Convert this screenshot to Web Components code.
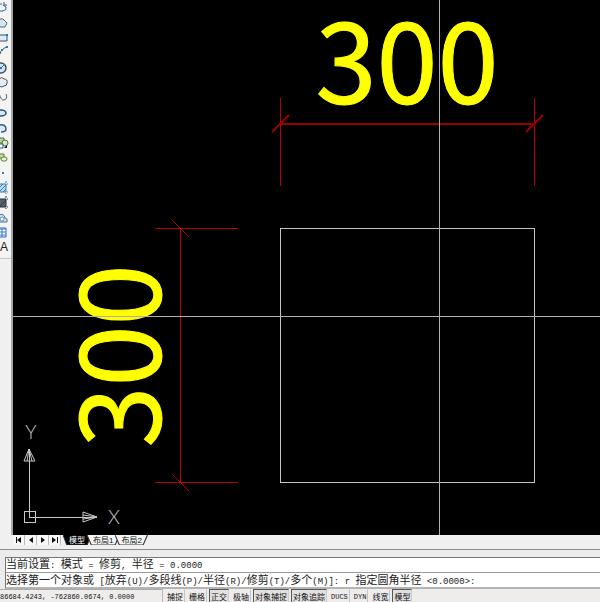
<!DOCTYPE html>
<html lang="zh-CN">
<head>
<meta charset="utf-8">
<title>CAD</title>
<style>
html, body { margin: 0; height: 100%; }
body { font-family: "Liberation Sans", "Noto Sans CJK SC", sans-serif; background: #f0f0f0; overflow: hidden; }
</style>
</head>
<body>
<cad-app></cad-app>
<script>
const define = (name, html, after) => customElements.define(name, class extends HTMLElement {
  constructor() {
    super();
    this.attachShadow({ mode: 'open' }).innerHTML = html;
  }
  connectedCallback() { if (after) after(this, this.shadowRoot); }
});

/* Tool button: its icon is passed in through the slot */
define('tool-button', `
<style>
:host { display: block; height: 15px; }
button { display: block; width: 100%; height: 100%; margin: 0; padding: 0; border: 0; background: none; overflow: hidden; text-align: left; color: #222; font: 12px/15px "Liberation Sans", sans-serif; }
</style>
<button><slot></slot></button>`, (el, root) => {
  root.querySelector('button').setAttribute('aria-label', el.getAttribute('label'));
});

const icons = [
  ['多段线', '<path d="M0 4h2M0 11h3q4-1 3-4l-3-2" stroke="#2a5f96"/><path d="M4 2v3h3" stroke="#2a5f96"/>'],
  ['正多边形', '<path d="M-3 6L0 4h3l4 4-2 4h-8z" fill="#d7e5f0" stroke="#53687a"/>'],
  ['矩形', '<path d="M-4 5h11v6H-4z" fill="#dfeaf5" stroke="#34526f"/><path d="M6 4h2v2H6z" fill="#2a6dac"/>'],
  ['圆弧', '<path d="M7 2Q1 4 0 9" stroke="#3f4d5a"/><path d="M6 1h2v2H6zM1 4h2v2H1z" fill="#2d78be"/>'],
  ['圆', '<circle cx="1" cy="8" r="5" fill="#d6e6f4" stroke="#46515e" stroke-width="1.5"/><path d="M1 8l4-4" stroke="#2272bb"/><path d="M0 7h2v2H0z" fill="#2272bb"/>'],
  ['修订云线', '<path d="M-1 4q3-3 5 0 4 0 3 4 0 3-3 3-2 2-5 0" fill="#e3edf4" stroke="#47535e"/>'],
  ['样条曲线', '<path d="M-1 3q2 8 5 7 4-1 2-6" stroke="#59616a"/>'],
  ['椭圆', '<ellipse cx="1" cy="8" rx="5" ry="3" fill="#dceaf6" stroke="#28587e" stroke-width="1.6"/>'],
  ['椭圆弧', '<path d="M-1 5q7-1 7 4 0 3-5 3" fill="#dceaf6" stroke="#2e5f8b" stroke-width="1.5"/>'],
  ['插入块', '<path d="M-2 3h6v5h-6z" fill="#b5d39a" stroke="#557348"/><circle cx="5" cy="8" r="3" fill="#dbeabf" stroke="#53704b"/><path d="M-1 9h4v4h-4z" fill="#fff" stroke="#315c89"/><path d="M7 10v3H4z" fill="#111"/>'],
  ['创建块', '<path d="M-2 4h6v4h-6z" fill="#c4dcac" stroke="#5a8539"/><rect x="1" y="7" width="6" height="4" rx="2" fill="#e9f1c9" stroke="#5b843b"/>'],
  ['点', '<path d="M2 7h2v2H2z" fill="#397bb4"/>'],
  ['图案填充', '<path d="M-1 4h7v8h-7z" fill="#bcdcf3" stroke="#387aac"/><path d="M0 7l3-3M0 11l6-6M3 12l3-3M6 3V1M7 4h1M7 12h1M6 13v1" stroke="#387aac"/>'],
  ['渐变色', '<path d="M-1 4h7v8h-7z" fill="#53626b" stroke="#22313b"/><path d="M0 11l6-6M6 3V1M7 4h1M7 12h1M6 13v1" stroke="#26394a"/>'],
  ['面域', '<path d="M-1 12V5q5-2 6 3l2 1v3z" fill="#d2e5f4" stroke="#3e719d"/><circle cx="2" cy="9" r="2" fill="#fff" stroke="#658fb2"/>'],
  ['表格', '<path d="M-1 3h7v9h-7z" fill="#fff" stroke="#2869b9"/><path d="M0 4h6M0 7h6M0 10h6M2 4v8" stroke="#3878c5"/>']
];
define('tool-bar', `
<style>
:host { display: block; width: 13px; box-sizing: border-box; background: #f0f0f0; border-right: 2px solid #a6a6a6; }
nav { border-bottom: 1px solid #c4c4c4; padding-bottom: 3px; background: #f4f4f2; }
svg { display: block; width: 9px; height: 15px; fill: none; }
</style>
<nav>${icons.map(([label, art]) => `<tool-button label="${label}"><svg viewBox="0 0 9 15">${art}</svg></tool-button>`).join('')}<tool-button label="多行文字">A</tool-button></nav>`);

define('drawing-canvas', `
<style>
:host { display: block; background: #000; min-width: 0; min-height: 0; }
svg { display: block; width: 100%; height: 100%; overflow: visible; shape-rendering: crispEdges; fill: none; }
.dim { stroke: #b80000; }
.wide { stroke: #980000; stroke-width: 2px; }
.num { fill: #ff0; stroke: #ff0; stroke-width: 1px; font: 110px "Noto Sans CJK SC", sans-serif; text-anchor: middle; }
.axis { stroke: #c8c8c8; }
.name { fill: #c8c8c8; font: 300 19px Lato, sans-serif; text-anchor: middle; }
.soft { shape-rendering: auto; }
</style>
<svg>
  <text class="num" x="394" y="104">300</text>
  <text class="num" transform="translate(148 356) rotate(-90)">300</text>
  <g class="dim">
    <path class="wide" d="M267 124H521"/>
    <path d="M267 98V186M521 98V186M142 228H225M142 482H225M167 228V482"/>
    <path class="soft wide" d="M259 132l17-17M513 132l17-17"/>
    <path class="soft" d="M159 220l17 17M159 474l17 17"/>
  </g>
  <path d="M267 228H521V482H267Z" stroke="#c4c4c4"/>
  <g class="axis">
    <path d="M11 511h11v11H11zM16 517V449M16 517H83"/>
    <path class="soft" d="M16 449l-5 12h11zM16 449l-2 12M16 449l3 12M84 517l-14-5v10zM84 517l-14-2M84 517l-14 2"/>
  </g>
  <text class="name" x="18" y="439">Y</text>
  <text class="name" x="101" y="524">X</text>
  <line x1="426" y1="0" x2="426" y2="100%" stroke="#b0b0b0"/>
  <line x1="0" y1="316" x2="100%" y2="316" stroke="#b0b0b0"/>
</svg>`);

define('layout-tab', `
<style>
:host { display: block; position: relative; height: 10px; margin-right: -4px; }
svg { position: absolute; inset: 0; width: 100%; height: 100%; fill: #f6f6f6; stroke: #333; }
:host([active]) svg { fill: #000; }
button { position: relative; display: block; height: 10px; margin: 0; padding: 0 6px; border: 0; background: none; white-space: nowrap; font: 8px/11px "Liberation Sans", "Noto Sans CJK SC", sans-serif; color: #111; }
:host([active]) button { color: #fff; }
</style>
<svg viewBox="0 0 30 10" preserveAspectRatio="none"><path d="M0 0l4 10h22l4-10"/></svg>
<button><slot></slot></button>`);

define('layout-tabs', `
<style>
:host { display: flex; height: 10px; padding-left: 13px; background: #f0f0f0; }
.step { box-sizing: border-box; width: 12px; height: 10px; margin: 0; padding: 0; border: 0; border-right: 1px solid #bbb; background: #f7f7f7; }
.step svg { display: block; width: 11px; height: 10px; fill: #111; }
.tabs { display: flex; padding-left: 2px; }
</style>
<button class="step" aria-label="第一个"><svg viewBox="0 0 11 10"><path d="M3 2h1v6H3zM8 2v6L4 5z"/></svg></button>
<button class="step" aria-label="上一个"><svg viewBox="0 0 11 10"><path d="M8 2v6L4 5z"/></svg></button>
<button class="step" aria-label="下一个"><svg viewBox="0 0 11 10"><path d="M4 2v6l4-3z"/></svg></button>
<button class="step" aria-label="最后一个"><svg viewBox="0 0 11 10"><path d="M3 2v6l4-3zM8 2h1v6H8z"/></svg></button>
<div class="tabs"><layout-tab active>模型</layout-tab><layout-tab>布局1</layout-tab><layout-tab>布局2</layout-tab></div>`);

define('command-line', `
<style>
:host { display: block; margin-top: 4px; padding: 7px 0 0 5px; border-top: 1px solid #8c8c8c; background: #ececec; }
.box { border: 1px solid #777; border-right: 0; border-bottom: 2px solid #b4b4b4; background: #fff; color: #222; }
p { margin: 0; height: 14px; white-space: pre; font: 11px/10px "Noto Sans CJK SC", sans-serif; }
p + p { border-top: 1px solid #999; line-height: 13px; }
span { font-family: "Liberation Mono", monospace; font-size: 9px; }
</style>
<div class="box">
<p>当前设置<span>: </span>模式<span> = </span>修剪<span>, </span>半径<span> = 0.0000</span></p>
<p>选择第一个对象或<span> [</span>放弃<span>(U)/</span>多段线<span>(P)/</span>半径<span>(R)/</span>修剪<span>(T)/</span>多个<span>(M)]: r </span>指定圆角半径<span> &lt;0.0000&gt;:</span></p>
</div>`);

define('status-toggle', `
<style>
:host { display: block; }
button { display: block; box-sizing: border-box; height: 14px; margin: 0; padding: 0 1px; border: 1px solid transparent; border-right-color: #c4c4c4; background: none; white-space: nowrap; font: 8px/13px "Noto Sans CJK SC", sans-serif; color: #111; }
:host([latin]) button { font: 7px/15px "Liberation Mono", monospace; }
button[aria-pressed=true] { border-color: #555 #ccc #ccc #555; background: #e2e0e0; }
</style>
<button><slot></slot></button>`, (el, root) => {
  root.querySelector('button').setAttribute('aria-pressed', el.hasAttribute('on'));
});

define('status-bar', `
<style>
:host { display: flex; gap: 2px; height: 13px; overflow: hidden; background: #efecec; }
.coords { box-sizing: border-box; width: 163px; border-top: 1px solid #aaa; border-right: 1px solid #bbb; white-space: pre; font: 7px/15px "Liberation Mono", monospace; color: #111; }
</style>
<div class="coords">86684.4243, -762860.0674, 0.0000</div>
<status-toggle>捕捉</status-toggle><status-toggle>栅格</status-toggle><status-toggle on>正交</status-toggle><status-toggle>极轴</status-toggle><status-toggle on>对象捕捉</status-toggle><status-toggle on>对象追踪</status-toggle><status-toggle latin>DUCS</status-toggle><status-toggle latin>DYN</status-toggle><status-toggle>线宽</status-toggle><status-toggle on>模型</status-toggle>`);

define('cad-app', `
<style>
:host { display: grid; height: 100vh; grid-template-rows: minmax(0, 1fr) auto auto auto; }
.work { display: grid; grid-template-columns: auto minmax(0, 1fr); min-height: 0; }
</style>
<div class="work"><tool-bar></tool-bar><drawing-canvas></drawing-canvas></div>
<layout-tabs></layout-tabs>
<command-line></command-line>
<status-bar></status-bar>`);
</script>
</body>
</html>
